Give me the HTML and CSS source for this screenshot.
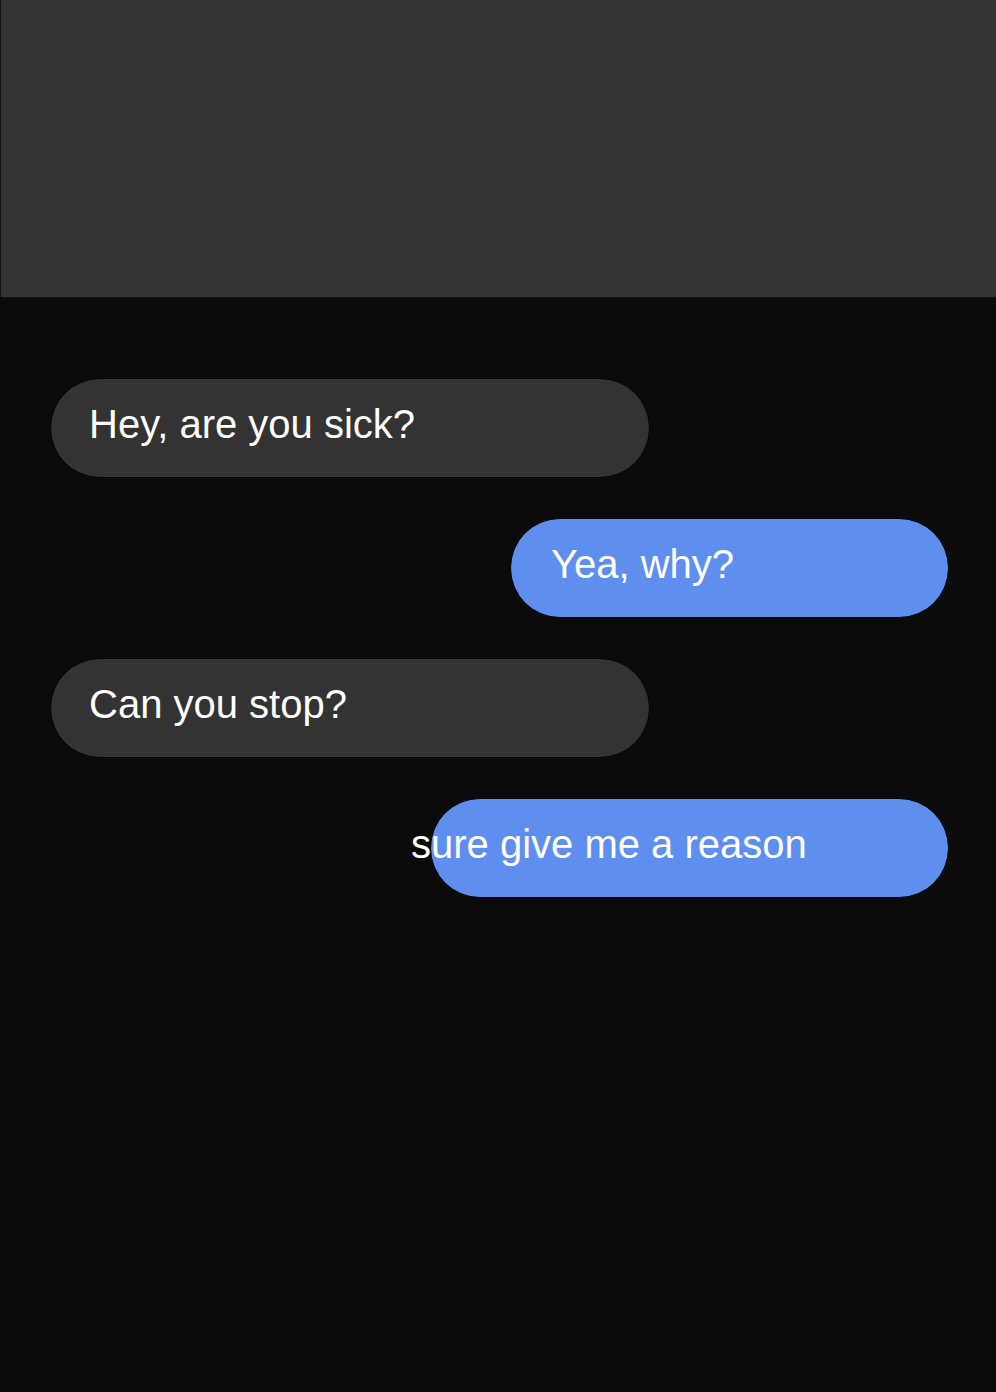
FILE: index.html
```html
<!DOCTYPE html>
<html>
<head>
<meta charset="utf-8">
<link rel="stylesheet" href="styles.css">
</head>
<body>
<div class="header"></div>
<div class="chat">
  <div class="bubble them wide"><span class="msg">Hey, are you sick?</span></div>
  <div class="bubble me w439"><span class="msg">Yea, why?</span></div>
  <div class="bubble them wide"><span class="msg">Can you stop?</span></div>
  <div class="bubble me w519"><span class="msg shift">sure give me a reason</span></div>
</div>
</body>
</html>
```
FILE: styles.css
```css
html, body {
  margin: 0;
  padding: 0;
  background: #0b0b0b;
  height: 100%;
}
body {
  font-family: "Liberation Sans", Arial, sans-serif;
  overflow: hidden;
}
.header {
  height: 297px;
  background: #333333;
  border-left: 1px solid #111;
  border-bottom: 1px solid #111;
}
.chat {
  display: flex;
  flex-direction: column;
  gap: 40px;
  padding: 80px 47px 0 50px;
}
.bubble {
  box-sizing: border-box;
  height: 100px;
  border: 1px solid #000;
  border-radius: 50px;
  display: flex;
  align-items: center;
  padding: 0 0 8px 38px;
  color: #fff;
  font-size: 40px;
  line-height: 46px;
  white-space: nowrap;
}
.them {
  background: #333333;
  align-self: flex-start;
}
.me {
  background: #5e8eee;
  align-self: flex-end;
  padding-left: 40px;
}
.wide { width: 600px; }
.w439 { width: 439px; }
.w519 { width: 519px; }
.msg { display: inline-block; }
.shift { margin-left: -60px; }
```
